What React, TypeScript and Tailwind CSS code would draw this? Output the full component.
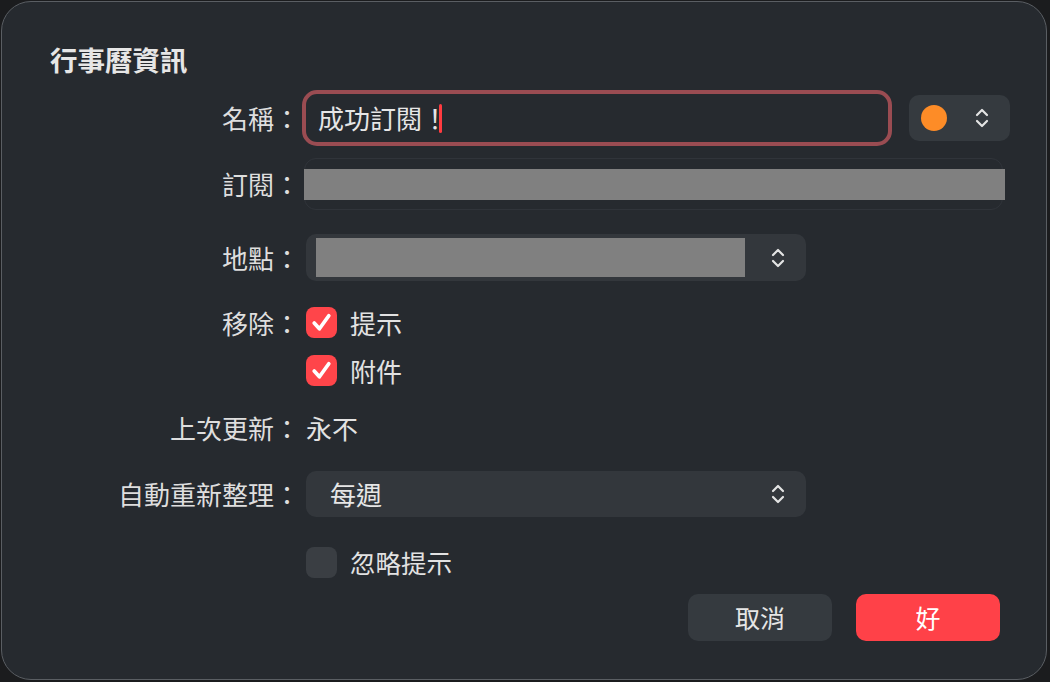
import React from 'react';

const font = { fontFamily: '"Noto Sans CJK TC", "Noto Sans", sans-serif' };

function UpDown() {
  return (
    <svg width="14" height="24" viewBox="0 0 14 24" fill="none" stroke="#e4e4e4" strokeWidth="2.2" strokeLinecap="round" strokeLinejoin="round">
      <path d="M2 9 L7 4 L12 9" />
      <path d="M2 15 L7 20 L12 15" />
    </svg>
  );
}

function Checkbox({ checked }: { checked: boolean }) {
  return (
    <div
      className={`w-[31px] h-[31px] rounded-[8px] flex items-center justify-center shrink-0 ${
        checked ? 'bg-[#ff454a]' : 'bg-[#3a3e43]'
      }`}
    >
      {checked && (
        <svg width="25" height="25" viewBox="0 0 24 24" fill="none" stroke="#ffffff" strokeWidth="3.6" strokeLinecap="round" strokeLinejoin="round">
          <path d="M5 12.5 L10 18 L19 5.5" />
        </svg>
      )}
    </div>
  );
}

function Label({ children }: { children: React.ReactNode }) {
  return <div className="text-right text-[26px] leading-none text-[#dedede] whitespace-nowrap">{children}</div>;
}

export default function App() {
  return (
    <div className="w-[1050px] h-[682px] bg-[#1b1c1e] pt-px pl-px overflow-hidden" style={font}>
      <div className="w-[1046px] h-[679px] rounded-[30px] border border-[#5a5e63] bg-[#262a2f] flex flex-col">
        {/* Title */}
        <h1 className="mt-[39px] ml-[48px] h-[36px] leading-[36px] text-[27.5px] font-bold text-[#e6e6e6]">行事曆資訊</h1>

        <div className="grid grid-cols-[298px_1fr] gap-x-[6px] items-center">
          {/* 名稱 */}
          <div className="mt-[17px]"><Label>名稱：</Label></div>
          <div className="mt-[17px] flex items-center">
            <div className="w-[582px] h-[48px] rounded-[11px] outline-[4px] outline-solid outline-[#9a4c52] flex items-center pl-[12px]">
              <span className="text-[26px] leading-none text-[#e6e6e6]">成功訂閱！</span>
              <span className="w-[3px] h-[29px] rounded-full bg-[#ff3b40] -ml-[9px]" />
            </div>
            <div className="ml-[21px] w-[101px] h-[46px] rounded-[10px] bg-[#353a3f] flex items-center pl-[12px]">
              <div className="w-[26px] h-[26px] rounded-full bg-[#fd8c27]" />
              <div className="ml-auto mr-[21px] flex"><UpDown /></div>
            </div>
          </div>

          {/* 訂閱 */}
          <div className="mt-[16px]"><Label>訂閱：</Label></div>
          <div className="mt-[16px] -ml-[2px] w-[699px] h-[52px] rounded-[12px] border border-[#30343a] flex items-center">
            <div className="-ml-px w-[701px] h-[31px] shrink-0 bg-[#808080]" />
          </div>

          {/* 地點 */}
          <div className="mt-[24px]"><Label>地點：</Label></div>
          <div className="mt-[24px] w-[500px] h-[47px] rounded-[10px] bg-[#33373c] flex items-center pl-[10px]">
            <div className="w-[429px] h-[39px] bg-[#808080]" />
            <div className="ml-auto mr-[21px] flex"><UpDown /></div>
          </div>

          {/* 移除 */}
          <div className="mt-[26px]"><Label>移除：</Label></div>
          <div className="mt-[26px] flex items-center gap-[13px] h-[31px]">
            <Checkbox checked />
            <span className="text-[26px] leading-none text-[#e2e2e2]">提示</span>
          </div>
          <div className="mt-[17px]" />
          <div className="mt-[17px] flex items-center gap-[13px] h-[31px]">
            <Checkbox checked />
            <span className="text-[26px] leading-none text-[#e2e2e2]">附件</span>
          </div>

          {/* 上次更新 */}
          <div className="mt-[26px] h-[32px] flex items-center justify-end"><Label>上次更新：</Label></div>
          <div className="mt-[26px] h-[32px] flex items-center text-[26px] leading-none text-[#e2e2e2]">永不</div>

          {/* 自動重新整理 */}
          <div className="mt-[27px]"><Label>自動重新整理：</Label></div>
          <div className="mt-[27px] w-[500px] h-[46px] rounded-[10px] bg-[#33373c] flex items-center pl-[24px]">
            <span className="text-[26px] leading-none text-[#e6e6e6]">每週</span>
            <div className="ml-auto mr-[21px] flex"><UpDown /></div>
          </div>

          {/* 忽略提示 */}
          <div className="mt-[29px]" />
          <div className="mt-[29px] flex items-center gap-[13px] h-[32px]">
            <Checkbox checked={false} />
            <span className="text-[25.5px] leading-none text-[#e2e2e2]">忽略提示</span>
          </div>
        </div>

        {/* Buttons */}
        <div className="mt-[16px] flex justify-end gap-[24px] pr-[46px]">
          <button className="w-[144px] h-[47px] rounded-[10px] bg-[#353a3f] text-[25px] text-[#e6e6e6]">取消</button>
          <button className="w-[144px] h-[47px] rounded-[10px] bg-[#ff4148] text-[25px] text-white">好</button>
        </div>
      </div>
    </div>
  );
}
